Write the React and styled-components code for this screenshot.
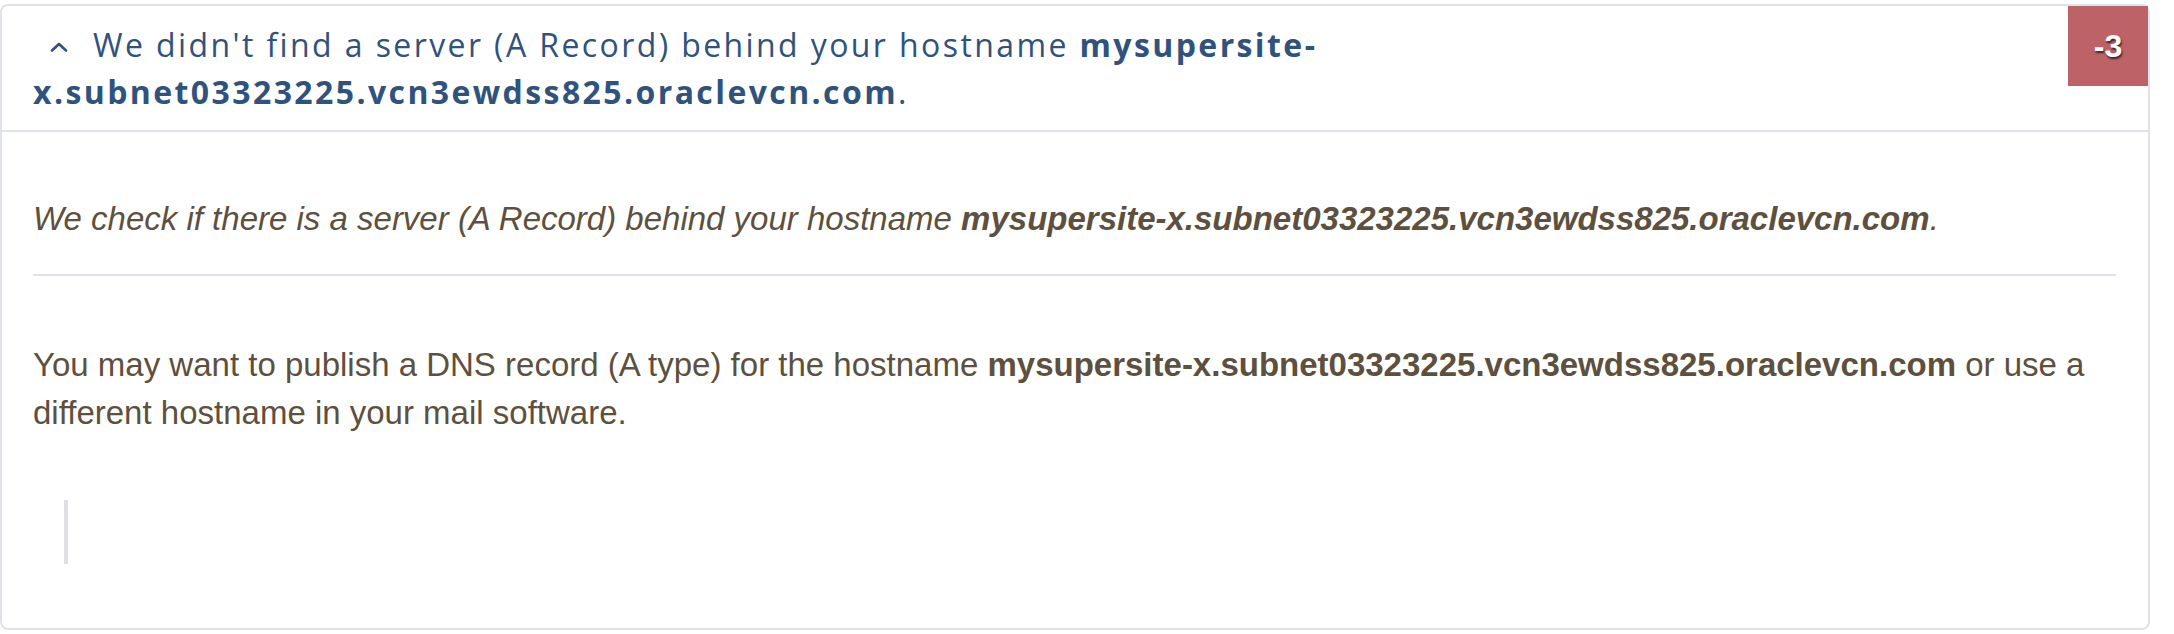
import React from "react";
import styled, { createGlobalStyle } from "styled-components";

const Global = createGlobalStyle`
  html, body { margin: 0; padding: 0; background: #ffffff; }
  body { padding-top: 4px; }
`;

const Panel = styled.section`
  width: 2150px;
  box-sizing: border-box;
  border: 2px solid #dfe2e6;
  border-radius: 8px;
  background: #fff;
`;

const Header = styled.header`
  display: flex;
  align-items: flex-start;
  border-bottom: 2px solid #e0e3e7;
`;

const Title = styled.h2`
  flex: 1;
  margin: 0;
  padding: 15px 40px 15px 31px;
  font-family: "Open Sans", "Noto Sans", sans-serif;
  font-size: 32px;
  line-height: 47px;
  font-weight: 400;
  letter-spacing: 2.4px;
  color: #30537d;
  b { font-weight: 700; }
`;

const Caret = styled.svg`
  display: inline-block;
  width: 18px;
  height: 10px;
  margin: 0 25px 0 17px;
  vertical-align: 5px;
`;

const Score = styled.div`
  flex: none;
  width: 80px;
  height: 80px;
  display: flex;
  align-items: center;
  justify-content: center;
  background: #bd6266;
  color: #fff;
  font-family: "Liberation Sans", Arial, sans-serif;
  font-weight: 700;
  font-size: 32px;
  text-shadow: 1px 2px 2px rgba(0, 0, 0, 0.65);
`;

const Body = styled.div`
  padding: 63px 32px 64px 31px;
  font-family: "Liberation Sans", Arial, sans-serif;
  font-size: 33px;
  line-height: 48px;
  color: #5d503e;
  b { font-weight: 700; }
`;

const Lead = styled.p`
  margin: 0;
  font-style: italic;
`;

const Divider = styled.hr`
  margin: 31px 0 65px;
  height: 2px;
  border: 0;
  background: #dfe2e6;
`;

const Text = styled.p`
  margin: 0 0 63px;
`;

const Quote = styled.blockquote`
  margin: 0 0 0 31px;
  height: 64px;
  border-left: 4px solid #dfe0e4;
`;

const HOST = "mysupersite-x.subnet03323225.vcn3ewdss825.oraclevcn.com";

export default function App() {
  return (
    <>
      <Global />
      <Panel>
        <Header>
          <Title>
            <Caret viewBox="0 0 18 10" aria-hidden="true">
              <polyline
                points="2,8.5 9,2 16,8.5"
                fill="none"
                stroke="#30537d"
                strokeWidth="2.6"
                strokeLinecap="round"
                strokeLinejoin="round"
              />
            </Caret>
            We didn't find a server (A Record) behind your hostname <b>{HOST}</b>.
          </Title>
          <Score>-3</Score>
        </Header>
        <Body>
          <Lead>
            We check if there is a server (A Record) behind your hostname <b>{HOST}</b>.
          </Lead>
          <Divider />
          <Text>
            You may want to publish a DNS record (A type) for the hostname <b>{HOST}</b> or use a
            different hostname in your mail software.
          </Text>
          <Quote />
        </Body>
      </Panel>
    </>
  );
}
